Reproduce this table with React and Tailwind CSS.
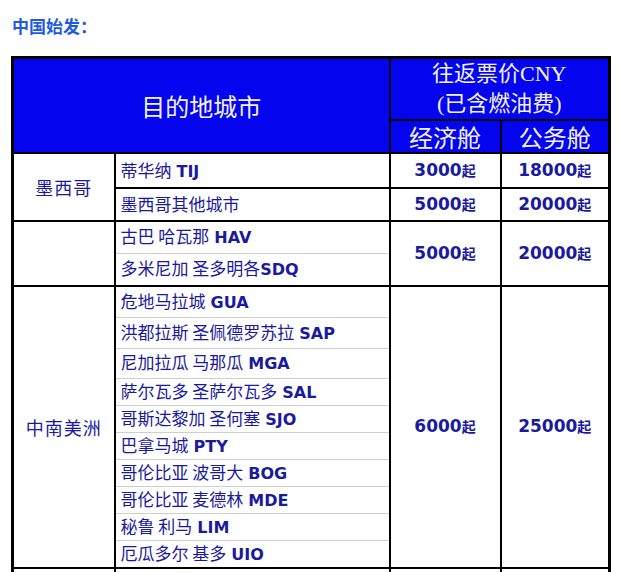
const cjk = "font-['Noto_Sans_CJK_SC',sans-serif]";

const groups = [
  {
    region: "墨西哥",
    rows: [
      { city: "蒂华纳", code: "TIJ", h: "h-[35px]" },
      { city: "墨西哥其他城市", code: "", h: "h-[33px]" },
    ],
    split: true,
    prices: [
      ["3000", "18000"],
      ["5000", "20000"],
    ],
  },
  {
    region: "",
    rows: [
      { city: "古巴 哈瓦那", code: "HAV", h: "h-[32px]" },
      { city: "多米尼加 圣多明各", code: "SDQ", h: "h-[33px]", tight: true },
    ],
    prices: [["5000", "20000"]],
  },
  {
    region: "中南美洲",
    rows: [
      { city: "危地马拉城", code: "GUA", h: "h-[31px]" },
      { city: "洪都拉斯 圣佩德罗苏拉", code: "SAP", h: "h-[31px]" },
      { city: "尼加拉瓜 马那瓜", code: "MGA", h: "h-[30px]" },
      { city: "萨尔瓦多 圣萨尔瓦多", code: "SAL", h: "h-[27px]" },
      { city: "哥斯达黎加 圣何塞", code: "SJO", h: "h-[27px]" },
      { city: "巴拿马城", code: "PTY", h: "h-[27px]" },
      { city: "哥伦比亚 波哥大", code: "BOG", h: "h-[27px]" },
      { city: "哥伦比亚 麦德林", code: "MDE", h: "h-[27px]" },
      { city: "秘鲁 利马", code: "LIM", h: "h-[27px]" },
      { city: "厄瓜多尔 基多", code: "UIO", h: "h-[28px]" },
    ],
    prices: [["6000", "25000"]],
  },
];

function Price({ value }) {
  return (
    <span className="text-[#1a1a9e]">
      <span className="font-['DejaVu_Sans',sans-serif] text-[17px] font-bold">{value}</span>
      <span className={`${cjk} text-[14px] font-bold`}>起</span>
    </span>
  );
}

function City({ city, code, tight }) {
  return (
    <span className="whitespace-nowrap text-[#1a1a9e]">
      <span className={`${cjk} text-[17px]`}>{city}</span>
      {code && (
        <span className={`font-['DejaVu_Sans',sans-serif] text-[16px] font-bold ${tight ? "" : "ml-[5px]"}`}>
          {code}
        </span>
      )}
    </span>
  );
}

export default function App() {
  return (
    <div className="h-[572px] w-[619px] overflow-hidden bg-white">
      <div className={`${cjk} pl-[12px] pt-[15px] text-[17px] font-bold leading-[22px] text-[#1e5be0]`}>
        中国始发：
      </div>

      <table className="ml-[11px] mt-[19px] w-[597px] table-fixed border-collapse border-[3px] border-black">
        <colgroup>
          <col className="w-[102px]" />
          <col className="w-[275px]" />
          <col className="w-[111px]" />
          <col className="w-[109px]" />
        </colgroup>
        <thead>
          <tr className="h-[62px]">
            <th
              rowSpan={2}
              colSpan={2}
              className={`${cjk} border-2 border-black bg-[#0404ee] text-[24px] font-normal text-[#f2f2f2]`}
            >
              目的地城市
            </th>
            <th
              colSpan={2}
              className="border-2 border-black bg-[#0404ee] p-0 font-['Liberation_Serif','Noto_Sans_CJK_SC',serif] text-[22px] font-normal leading-[30px] text-[#f2f2f2]"
            >
              往返票价CNY
              <br />
              (已含燃油费)
            </th>
          </tr>
          <tr className="h-[33px]">
            <th className={`${cjk} border-2 border-black bg-[#0404ee] p-0 text-[24px] font-normal leading-[28px] text-[#f2f2f2]`}>
              经济舱
            </th>
            <th className={`${cjk} border-2 border-black bg-[#0404ee] p-0 text-[24px] font-normal leading-[28px] text-[#f2f2f2]`}>
              公务舱
            </th>
          </tr>
        </thead>
        <tbody>
          {groups.map((g, gi) =>
            g.rows.map((r, ri) => {
              const first = ri === 0;
              const groupTop = first ? "border-t-2 border-t-black" : "border-t border-t-[#cfcfcf]";
              return (
                <tr key={`${gi}-${ri}`} className={r.h}>
                  {first && (
                    <td
                      rowSpan={g.rows.length}
                      className={`${cjk} border-2 border-black text-center text-[18px] tracking-[1px] text-[#1a1a9e]`}
                    >
                      {g.region}
                    </td>
                  )}
                  <td
                    className={`border-x-2 border-x-black ${
                      g.split && !first ? "border-t-2 border-t-black" : groupTop
                    } p-0 pl-[5px] leading-[22px]`}
                  >
                    <City city={r.city} code={r.code} tight={r.tight} />
                  </td>
                  {g.split ? (
                    <>
                      <td className="border-2 border-black p-0 text-center">
                        <Price value={g.prices[ri][0]} />
                      </td>
                      <td className="border-2 border-black p-0 text-center">
                        <Price value={g.prices[ri][1]} />
                      </td>
                    </>
                  ) : (
                    first && (
                      <>
                        <td rowSpan={g.rows.length} className="border-2 border-black p-0 text-center">
                          <Price value={g.prices[0][0]} />
                        </td>
                        <td rowSpan={g.rows.length} className="border-2 border-black p-0 text-center">
                          <Price value={g.prices[0][1]} />
                        </td>
                      </>
                    )
                  )}
                </tr>
              );
            })
          )}
          <tr className="h-[30px]">
            <td className="border-2 border-black"></td>
            <td className="border-2 border-black"></td>
            <td className="border-2 border-black"></td>
            <td className="border-2 border-black"></td>
          </tr>
        </tbody>
      </table>
    </div>
  );
}
